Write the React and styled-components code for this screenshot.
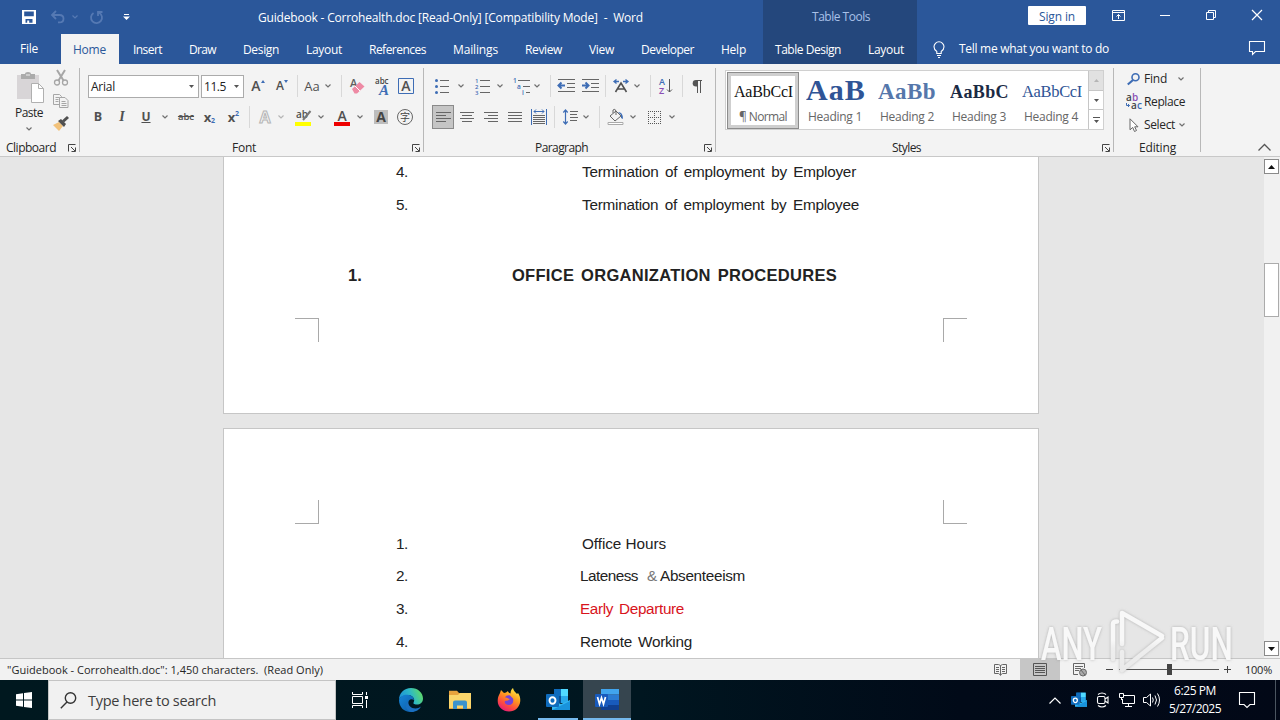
import styled, { createGlobalStyle, css } from "styled-components"
import { useLayoutEffect, useRef, useState } from "react"

const GlobalStyle = createGlobalStyle`
  * {
    box-sizing: border-box;
  }

  body {
    margin: 0;
    overflow: hidden;
    font-family: "Open Sans", "Noto Sans", sans-serif;
    font-size: 12px;
    color: #262626;
  }

  svg {
    display: block;
    flex: none;
    overflow: visible;
  }
`

const Window = styled.div`
  position: relative;
  width: 1280px;
  height: 720px;
  display: flex;
  flex-direction: column;
  overflow: hidden;
`

/* ---------- shared pieces ---------- */

const FitBox = styled.span`
  flex: none;
  display: block;
  width: ${(p) => p.$w}px;
  margin-left: ${(p) => p.$ml || 0}px;
  white-space: pre;
`

// spreads the letters so the label takes exactly w pixels
function Label({ w, ml, children, className }) {
  const ref = useRef(null)
  const [spacing, setSpacing] = useState(0)

  useLayoutEffect(() => {
    const el = ref.current
    const natural = el.getBoundingClientRect().width
    setSpacing((w - natural) / el.textContent.length)
  }, [w])

  return (
    <FitBox $w={w} $ml={ml} className={className}>
      <span ref={ref} style={{ letterSpacing: spacing }}>
        {children}
      </span>
    </FitBox>
  )
}

const Cell = styled.div`
  flex: none;
  width: ${(p) => p.$w || 24}px;
  height: 24px;
  margin-left: ${(p) => p.$ml || 0}px;
  display: flex;
  align-items: center;
  justify-content: center;
`

const Divider = styled.div`
  flex: none;
  width: 1px;
  height: 22px;
  margin-left: ${(p) => p.$ml || 0}px;
  background: #d8d8d8;
`

function Svg({ w = 16, h = 16, children, ...rest }) {
  return (
    <svg width={w} height={h} viewBox={`0 0 ${w} ${h}`} fill="none" {...rest}>
      {children}
    </svg>
  )
}

function Chevron({ color = "#707070" }) {
  return (
    <Svg w={6} h={4} stroke={color} strokeWidth="1.2">
      <path d="M.5 .5 3 3 5.5 .5" />
    </Svg>
  )
}

function Launcher() {
  return (
    <Svg w={8} h={8} stroke="#444">
      <path d="M.5 7.500V.5H7.500M3 3l4 4M7.500 3.500v4h-4" />
    </Svg>
  )
}

/* ---------- title bar ---------- */

const TitleBar = styled.header`
  height: 34px;
  flex: none;
  display: flex;
  background: #2b579a;
  color: #fff;
`

const QuickAccess = styled.div`
  width: 258px;
  height: 34px;
  padding-left: 17px;
  display: flex;
  align-items: center;
`

const DocTitle = styled.div`
  width: 505px;
  padding-top: 9px;
  line-height: 18px;
`

const ContextTitle = styled.div`
  width: 154px;
  padding: 9px 0 0 49px;
  line-height: 16px;
  background: #24477c;
  color: #a9c1e8;
`

const SignIn = styled.button`
  width: 58px;
  height: 19px;
  margin: 6px 0 0 111px;
  padding: 1px 0 0 11px;
  border: 0;
  border-radius: 1px;
  background: #fff;
  color: #2b579a;
  font: inherit;
  line-height: 20px;
  text-align: left;
`

const WindowButtons = styled.div`
  display: flex;
  padding: 3px 0 0 10px;
  height: 27px;
`

/* ---------- tabs ---------- */

const TabBar = styled.nav`
  height: 30px;
  flex: none;
  display: flex;
  background: #2b579a;
  color: #fff;
  line-height: 32px;
`

const FileTab = styled.div`
  width: 61px;
  padding-left: 20px;
  line-height: 30px;
`

const ActiveTab = styled.div`
  width: 58px;
  padding-left: 12px;
  background: #f3f3f3;
  color: #2b579a;
`

const TabList = styled.div`
  width: 644px;
  padding-left: 14px;
  display: flex;
  gap: 27px;
`

const ContextTabs = styled.div`
  width: 154px;
  padding-left: 12px;
  display: flex;
  gap: 27px;
  background: #24477c;
`

const TellMe = styled.div`
  display: flex;
  align-items: center;
  gap: 14px;
  padding-left: 16px;
  width: 332px;
  line-height: 30px;
`

const CommentIcon = styled.div`
  padding-top: 7px;
`

/* ---------- ribbon ---------- */

const Ribbon = styled.section`
  height: 93px;
  flex: none;
  display: flex;
  background: #f3f3f3;
  border-bottom: 1px solid #c8c8c8;
`

const GroupLine = styled.div`
  flex: none;
  width: 1px;
  height: 84px;
  margin-top: 4px;
  background: #b8b8b8;
`

const Group = styled.div`
  flex: none;
  width: ${(p) => p.$w}px;
  display: flex;
  flex-direction: column;
`

const GroupBody = styled.div`
  height: 76px;
  padding: 10px 0 0 ${(p) => p.$pl || 0}px;
`

const Row = styled.div`
  display: flex;
  align-items: center;
  height: 24px;
  margin-bottom: 7px;
`

const Caption = styled.div`
  height: 16px;
  display: flex;
  align-items: center;
  justify-content: space-between;
  padding: 0 3px 0 ${(p) => p.$pl}px;
  line-height: 16px;
`

const ClipboardBody = styled.div`
  height: 76px;
  display: flex;
`

const PasteButton = styled.div`
  width: 49px;
  padding: 8px 0 0 15px;
  display: flex;
  flex-direction: column;

  > span {
    margin-top: 1px;
  }

  > svg:last-child {
    margin: 6px 0 0 11px;
  }
`

const ClipboardTools = styled.div`
  padding-top: 6px;
  display: flex;
  flex-direction: column;
  gap: 7px;

  svg {
    margin-left: 4px;
  }
`

const Combo = styled.div`
  flex: none;
  width: ${(p) => p.$w}px;
  height: 23px;
  margin-left: ${(p) => p.$ml || 0}px;
  padding: 0 4px 0 2px;
  display: flex;
  align-items: center;
  justify-content: space-between;
  border: 1px solid #ababab;
  background: #fff;
  color: #222;
`

const Glyph = styled.span`
  font-family: ${(p) => (p.$serif ? '"Liberation Serif", serif' : '"Open Sans", sans-serif')};
  font-size: ${(p) => p.$size || 14}px;
  font-weight: ${(p) => p.$weight || 700};
  font-style: ${(p) => (p.$italic ? "italic" : "normal")};
  text-decoration: ${(p) => p.$deco || "none"};
  color: ${(p) => p.$color || "#505050"};
  line-height: 20px;
`

const Pressed = styled.div`
  width: 22px;
  height: 24px;
  display: flex;
  align-items: center;
  justify-content: center;
  border: 1px solid #8a8a8a;
  background: #c5c5c5;
`

const Gallery = styled.div`
  width: 379px;
  height: 60px;
  margin: -4px 0 0 9px;
  padding-left: 1px;
  display: flex;
  border: 1px solid #d0d0d0;
  background: #fff;
`

const StyleTile = styled.div`
  flex: none;
  width: 72px;
  height: 57px;
  margin-top: 1px;
  display: flex;
  flex-direction: column;
  overflow: hidden;
  ${(p) =>
    p.$active &&
    css`
      box-shadow: inset 0 0 0 1px #8c8c8c, inset 0 0 0 4px #cfcfcf;
    `}
`

const Sample = styled.div`
  height: 36px;
  margin-left: 7px;
  width: 60px;
  overflow: hidden;
  font-family: "Liberation Serif", serif;
  font-size: ${(p) => p.$size}px;
  font-weight: ${(p) => p.$weight || 400};
  line-height: ${(p) => p.$lh || 39}px;
  color: ${(p) => p.$color};
`

const StyleName = styled.div`
  padding-left: ${(p) => p.$pl}px;
  line-height: 18px;
  color: #666;
`

const GalleryScroll = styled.div`
  width: 15px;
  margin-left: auto;
  display: flex;
  flex-direction: column;
  border-left: 1px solid #c6c6c6;
`

const GalleryButton = styled.div`
  flex: 1;
  display: flex;
  align-items: center;
  justify-content: center;
  background: ${(p) => (p.$disabled ? "#e1e1e1" : "#fff")};

  & + & {
    border-top: 1px solid #c6c6c6;
  }
`

const EditingBody = styled.div`
  height: 76px;
  padding: 3px 0 0 10px;
`

const EditRow = styled.div`
  height: 23px;
  display: flex;
  align-items: center;
`

const EditIcon = styled.div`
  width: 19px;
  margin-right: 1px;
  display: flex;
  justify-content: center;
`

const CollapseArea = styled.div`
  flex: 1;
  display: flex;
  align-items: flex-end;
  justify-content: flex-end;
  padding: 0 9px 5px 0;
`

/* ---------- document ---------- */

const Workspace = styled.main`
  height: 501px;
  flex: none;
  display: flex;
  justify-content: space-between;
  padding-left: 223px;
  background: #e6e6e6;
`

const Pages = styled.div`
  width: 816px;
  display: flex;
  flex-direction: column;
  gap: 14px;
  overflow: hidden;
`

const Page = styled.article`
  flex: none;
  height: ${(p) => p.$h}px;
  border: 1px solid #c6c6c6;
  border-top-width: ${(p) => (p.$cut ? 0 : 1)}px;
  background: #fff;
  color: #222;
  font-family: "Liberation Sans", Arial, sans-serif;
  font-size: 15.3px;
`

const Line = styled.div`
  display: flex;
  height: ${(p) => p.$h || 32}px;
  line-height: ${(p) => p.$h || 32}px;
  margin-top: ${(p) => p.$mt || 0}px;
  padding-left: ${(p) => p.$pl || 172}px;
  word-spacing: ${(p) => p.$ws || 0}px;
`

const Heading = styled(Line)`
  font-weight: 700;
  font-size: 16.5px;
`

const Amp = styled(Label)`
  color: #777;
`

const RedLabel = styled(Label)`
  color: #d8141c;
  word-spacing: 2px;
`

const CropMarks = styled.div`
  display: flex;
  justify-content: space-between;
  margin: ${(p) => p.$mt}px 71px 0;
`

const Crop = styled.div`
  width: 24px;
  height: 24px;
  border: 0 solid #a9a9a9;
  border-width: ${(p) => p.$sides};
`

const ScrollBar = styled.div`
  width: 16px;
  padding-top: 2px;
  display: flex;
  flex-direction: column;
  background: #f1f1f1;
`

const ScrollButton = styled.div`
  width: 15px;
  height: 15px;
  display: flex;
  align-items: center;
  justify-content: center;
  border: 1px solid #8a8a8a;
  background: #fff;
`

const Thumb = styled.div`
  width: 15px;
  height: 54px;
  margin: 89px 0 324px;
  border: 1px solid #ababab;
  background: #fff;
`

/* ---------- status bar ---------- */

const StatusBar = styled.footer`
  height: 22px;
  flex: none;
  display: flex;
  align-items: center;
  padding-left: 7px;
  border-top: 1px solid #c6c6c6;
  background: #f2f2f2;
  font-size: 11px;
  line-height: 21px;
`

const ViewButton = styled.div`
  width: 40px;
  height: 21px;
  display: flex;
  align-items: center;
  justify-content: center;
  background: ${(p) => (p.$active ? "#c6c6c6" : "transparent")};
`

const Views = styled.div`
  display: flex;
  margin-left: 657px;
`

const Slider = styled.div`
  width: 100px;
  height: 21px;
  margin: 0 5px;
  display: flex;
  align-items: center;
  justify-content: center;
  background: linear-gradient(#555, #555) center / 100% 1px no-repeat;
`

const Knob = styled.div`
  width: 5px;
  height: 11px;
  background: #444;
`

/* ---------- taskbar ---------- */

const Taskbar = styled.div`
  height: 40px;
  flex: none;
  display: flex;
  background: linear-gradient(90deg, #00181f 0%, #001620 50%, #010a18 75%, #020817 100%);
  color: #fff;
`

const Start = styled.div`
  width: 48px;
  display: flex;
  align-items: center;
  justify-content: center;
`

const Search = styled.div`
  width: 288px;
  padding-left: 11px;
  display: flex;
  align-items: center;
  border: 1px solid #c4c4c4;
  background: #f1f1f1;
  color: #3d3d3d;
  font-size: 14.5px;
`

const TaskButton = styled.div`
  width: ${(p) => p.$w || 49}px;
  margin-left: ${(p) => p.$ml || 0}px;
  height: 40px;
  display: flex;
  align-items: center;
  justify-content: center;
  background: ${(p) => (p.$active ? "#36454f" : "transparent")};
  border-bottom: ${(p) => (p.$open ? "2px solid #76b9ed" : "0")};
  padding-top: ${(p) => (p.$open ? 2 : 0)}px;
`

const Tray = styled.div`
  display: flex;
  align-items: center;
  margin-left: auto;
`

const TrayIcon = styled.div`
  width: 24px;
  display: flex;
  justify-content: center;
`

const Clock = styled.div`
  width: 54px;
  margin: 0 16px 0 6px;
  line-height: 18px;
`

const ShowDesktop = styled.div`
  width: 5px;
  height: 40px;
  margin-left: 20px;
  border-left: 1px solid #4b5560;
`

const Watermark = styled.div`
  position: absolute;
  left: 1038px;
  top: 606px;
`

/* ---------- icons ---------- */

const blue = "#3e6db5"

function Lines({ rows, color = "#666" }) {
  return (
    <g stroke={color}>
      {rows.map(([x1, x2, y]) => (
        <path key={y} d={`M${x1} ${y}H${x2}`} />
      ))}
    </g>
  )
}

function IndentIcon({ flip }) {
  return (
    <Svg w={17} h={14}>
      <Lines rows={[[0, 17, 0.5], [9, 17, 4.5], [9, 17, 8.5], [0, 17, 12.5]]} />
      <path
        d={flip ? "M0 6.500h6M3.500 3.500l3 3-3 3" : "M7 6.500H1M3.500 3.500l-3 3 3 3"}
        stroke={blue}
        strokeWidth="2"
      />
    </Svg>
  )
}

function OutlookIcon({ s = 24 }) {
  return (
    <svg width={s} height={s} viewBox="0 0 24 24">
      <path d="M8 1h14v14H8z" fill="#1490df" />
      <path d="M15 1h7v7h-7z" fill="#50d9ff" />
      <path d="M8 1h7v7H8z" fill="#0f6cbd" />
      <path d="M8 8h7v7H8z" fill="#0a4f94" />
      <path d="M15 8h7v7h-7z" fill="#28a8ea" />
      <path d="M6 12l9 4 9-4v10H6z" fill="#35b8f1" />
      <path d="M6 22l18-9v9z" fill="#1993dc" />
      <rect x="0" y="6" width="13" height="13" rx="1" fill="#0f6cbd" />
      <ellipse cx="6.500" cy="12.500" rx="3" ry="3.300" fill="none" stroke="#fff" strokeWidth="1.900" />
    </svg>
  )
}

function WordIcon() {
  return (
    <svg width="25" height="24" viewBox="0 0 25 24">
      <path d="M6 1h18v5.500H6z" fill="#41a5ee" />
      <path d="M6 6.500h18V12H6z" fill="#2b7cd3" />
      <path d="M6 12h18v5H6z" fill="#185abd" />
      <path d="M6 17h18v5H6z" fill="#103f91" />
      <rect x="0" y="6" width="13" height="13" rx="1" fill="#185abd" />
      <path d="M2.500 9l2 7 2-6.300 2 6.300 2-7" fill="none" stroke="#fff" strokeWidth="1.700" />
    </svg>
  )
}

function EdgeIcon() {
  return (
    <svg width="24" height="24" viewBox="0 0 24 24">
      <defs>
        <linearGradient id="edgeTop" x1="0" x2="1" y1=".6" y2=".3">
          <stop offset="0" stopColor="#1c8fd8" />
          <stop offset=".5" stopColor="#2cb8c8" />
          <stop offset="1" stopColor="#62dc62" />
        </linearGradient>
        <linearGradient id="edgeLow" x1="0" x2="1" y1="0" y2="1">
          <stop offset="0" stopColor="#1685d8" />
          <stop offset="1" stopColor="#0c59a4" />
        </linearGradient>
      </defs>
      <path d="M0 12C0 5 5 0 12 0s12 5 12 10.500c0 4-3 6-6 6-3.500 0-4-1.300-3.300-2.300C16 12 15 8 10 7 5 6.500 1 9 0 12z" fill="url(#edgeTop)" />
      <path d="M0 12c1-3.500 4.500-5.500 8.500-5.300 4 .3 6.500 2.800 6.500 5.300-3-2-6 0-6 3.500 0 4 4 6.500 8 6.200-2 1.500-3.500 2.300-5.500 2.300C5 24 0 19 0 12z" fill="url(#edgeLow)" />
      <path d="M9.500 13c-1 4 2.500 7.500 7 7.500 2 0 4-.8 5.500-2-1.500 3-5 5.500-9.500 5.500C7 23 5 17 9.500 13z" fill="#1a6fc0" />
    </svg>
  )
}

function FolderIcon() {
  return (
    <svg width="22" height="20" viewBox="0 0 22 20">
      <path d="M0 2V.8h8L10 3h12v16H0z" fill="#e8a33d" />
      <path d="M0 5h9l2-2h11v15H0z" fill="#fbd66b" />
      <path d="M4 19v-6.500Q4 10.500 6 10.500h10q2 0 2 2V19h-4v-3.500H8V19z" fill="#3d93cc" />
    </svg>
  )
}

function FirefoxIcon() {
  return (
    <svg width="24" height="24" viewBox="0 0 24 24">
      <defs>
        <linearGradient id="fox" x1=".8" x2=".25" y1="0" y2="1">
          <stop offset="0" stopColor="#fff14a" />
          <stop offset=".4" stopColor="#ff9a1f" />
          <stop offset=".7" stopColor="#ff4f3d" />
          <stop offset="1" stopColor="#e5177b" />
        </linearGradient>
      </defs>
      <path d="M3 5l1-3 3 3 2-.5L11 3c0 1 1 2 2.500 2.500C13.500 3 14.500 1 16 0c.5 3 2.500 4 4 6l1-1c2 3 2.500 5.500 2.200 8.500C22.500 19.500 18 23.500 12 23.500S.7 19 .7 13C.7 10 1.500 7.500 3 5z" fill="url(#fox)" />
      <path d="M8 9.500c1-2 3-2.500 5-2l3 3c1 4-1 6.500-4 6.500-3.500 0-5-2.500-4-4l3-.5 2-1.500c-2 0-2-1.500-5-1.500z" fill="#7542d8" />
    </svg>
  )
}

/* ---------- sections ---------- */

function Header() {
  return (
    <>
      <TitleBar>
        <QuickAccess>
          <Cell>
            <Svg w={14} h={14} fill="#fff">
              <path d="M0 0h14v14H0zM2.200 1.500v4.800h9.600V1.500zM3.500 9v3.700h1.700v-2.200h2V12.700h3.300V9z" fillRule="evenodd" />
            </Svg>
          </Cell>
          <Cell $ml={5}>
            <Svg w={14} h={12} stroke="#5579b3" strokeWidth="1.800">
              <path d="M5 0L1 4l4 4M1 4h7.500q4 0 4 3.700t-4 3.700H7" />
            </Svg>
          </Cell>
          <Cell $w={10}>
            <Chevron color="#5579b3" />
          </Cell>
          <Cell $ml={4}>
            <Svg w={13} h={13} stroke="#5579b3" strokeWidth="1.800">
              <path d="M3.500 2A5.500 5.500 0 1 0 9 1.700M8 5V1h4.500" />
            </Svg>
          </Cell>
          <Cell $ml={6}>
            <Svg w={7} h={6} fill="#fff">
              <path d="M1 0h5v1H1zM0 2.500h7L3.500 6z" />
            </Svg>
          </Cell>
        </QuickAccess>
        <DocTitle>
          <Label w={385}>Guidebook - Corrohealth.doc [Read-Only] [Compatibility Mode]  -  Word</Label>
        </DocTitle>
        <ContextTitle>
          <Label w={58}>Table Tools</Label>
        </ContextTitle>
        <SignIn>
          <Label w={36}>Sign in</Label>
        </SignIn>
        <WindowButtons>
          <Cell $w={45}>
            <Svg w={13} h={11} stroke="#fff">
              <path d="M.5 .5h12v10H.5zM.5 2.500h12M6.500 9V4.500M4.500 6.500l2-2 2 2" />
            </Svg>
          </Cell>
          <Cell $w={46} $ml={1}>
            <Svg w={10} h={1} stroke="#fff">
              <path d="M0 .5h10" />
            </Svg>
          </Cell>
          <Cell $w={46}>
            <Svg w={10} h={10} stroke="#fff">
              <path d="M.5 2.500h7v7h-7zM2.500 2V.5h7v7H8" />
            </Svg>
          </Cell>
          <Cell $w={46}>
            <Svg w={10} h={10} stroke="#fff" strokeWidth="1.200">
              <path d="M0 0l10 10M10 0L0 10" />
            </Svg>
          </Cell>
        </WindowButtons>
      </TitleBar>

      <TabBar>
        <FileTab>
          <Label w={18}>File</Label>
        </FileTab>
        <ActiveTab>
          <Label w={33}>Home</Label>
        </ActiveTab>
        <TabList>
          <Label w={29}>Insert</Label>
          <Label w={27}>Draw</Label>
          <Label w={36}>Design</Label>
          <Label w={36}>Layout</Label>
          <Label w={57}>References</Label>
          <Label w={45}>Mailings</Label>
          <Label w={37}>Review</Label>
          <Label w={25}>View</Label>
          <Label w={53}>Developer</Label>
          <Label w={25}>Help</Label>
        </TabList>
        <ContextTabs>
          <Label w={66}>Table Design</Label>
          <Label w={36}>Layout</Label>
        </ContextTabs>
        <TellMe>
          <Svg w={12} h={17} stroke="#fff" strokeWidth="1.100">
            <path d="M3.800 12.500V10.500Q1 8.700 1 5.800a5 5 0 0 1 10 0Q11 8.700 8.200 10.500v2zM4 14.500h4M5 16.500h2" />
          </Svg>
          <Label w={150}>Tell me what you want to do</Label>
        </TellMe>
        <CommentIcon>
          <Svg w={16} h={14} stroke="#fff" strokeWidth="1.100">
            <path d="M.5 .5h15v10H6.500L3.500 13.500V10.500h-3z" />
          </Svg>
        </CommentIcon>
      </TabBar>
    </>
  )
}

function ClipboardGroup() {
  return (
    <Group $w={79}>
      <ClipboardBody>
        <PasteButton>
          <Svg w={28} h={31}>
            <path d="M2 3h22v24H2z" fill="#d8d5d7" />
            <path d="M6 2h4q0-2 3-2t3 2h4v5H6z" fill="#ababab" />
            <path d="M11 3h4" stroke="#eee" />
            <path d="M16.500 11.500h7l5 5v14h-12z" fill="#fff" stroke="#b0b0b0" />
            <path d="M23.500 11.500v5h5" stroke="#b0b0b0" />
          </Svg>
          <Label w={28}>Paste</Label>
          <Chevron />
        </PasteButton>
        <ClipboardTools>
          <Svg w={16} h={16} stroke="#a6a6a6" strokeWidth="1.300">
            <path d="M4 0l6.500 10.500M12 0L5.500 10.500" strokeWidth="2" />
            <circle cx="4" cy="12.500" r="2.500" />
            <circle cx="12" cy="12.500" r="2.500" />
          </Svg>
          <Svg w={16} h={16} stroke="#a6a6a6">
            <path d="M.5 1.500h6l2 2v8h-8zM2.500 4.500h4M2.500 6.500h3M2.500 8.500h3" />
            <path d="M6.500 4.500h5.500l3 3v7h-8.500z" fill="#f3f3f3" />
            <path d="M8.500 8.500h4M8.500 10.500h5M8.500 12.500h5" />
          </Svg>
          <Svg w={16} h={16}>
            <path d="M0 9l6-3 4 4-4 5z" fill="#f2c27b" />
            <path d="M5 5l6 6 2-3-5-5z" fill="#505050" />
            <path d="M10 5.500L15 1" stroke="#505050" strokeWidth="3" />
          </Svg>
        </ClipboardTools>
      </ClipboardBody>
      <Caption $pl={6}>
        <Label w={50}>Clipboard</Label>
        <Launcher />
      </Caption>
    </Group>
  )
}

function DropArrow() {
  return (
    <Svg w={5} h={3} fill="#555">
      <path d="M0 0h5L2.500 3z" />
    </Svg>
  )
}

function FontGroup() {
  return (
    <Group $w={343}>
      <GroupBody $pl={6}>
        <Row>
          <Combo $w={111} $ml={2}>
            <Label w={24}>Arial</Label>
            <DropArrow />
          </Combo>
          <Combo $w={43} $ml={2}>
            <Label w={22}>11.5</Label>
            <DropArrow />
          </Combo>
          <Cell $ml={2}>
            <Glyph $weight={600}>A</Glyph>
            <Svg w={4} h={13} fill={blue}>
              <path d="M0 3l2-3 2 3z" />
            </Svg>
          </Cell>
          <Cell>
            <Glyph $weight={600} $size={12}>A</Glyph>
            <Svg w={4} h={13} fill={blue}>
              <path d="M0 0h4L2 3z" />
            </Svg>
          </Cell>
          <Divider $ml={3} />
          <Cell $w={18} $ml={5}>
            <Glyph $weight={500} $size={13}>Aa</Glyph>
          </Cell>
          <Cell $w={10} $ml={2}>
            <Chevron />
          </Cell>
          <Divider $ml={8} />
          <Cell $ml={4}>
            <Svg w={16} h={16}>
              <text x="0" y="9" fontFamily="Open Sans" fontSize="11" fontWeight="600" fill="#606060">A</text>
              <path d="M2 11l7.500-7 5 4.500L7 15.500H4.500z" fill="#ee8aa4" />
              <path d="M5 8l5 5" stroke="#fff" />
            </Svg>
          </Cell>
          <Cell>
            <Svg w={16} h={17}>
              <text x="1" y="6" fontFamily="Open Sans" fontSize="8" fontWeight="600" fill="#444">abc</text>
              <text x="5" y="17" fontFamily="Liberation Serif" fontSize="15" fontWeight="700" fontStyle="italic" fill={blue}>A</text>
            </Svg>
          </Cell>
          <Cell>
            <Svg w={16} h={16}>
              <path d="M.5 .5h15v15H.5z" stroke={blue} />
              <text x="3.200" y="13" fontFamily="Open Sans" fontSize="14" fontWeight="600" fill="#505050">A</text>
            </Svg>
          </Cell>
        </Row>
        <Row>
          <Cell>
            <Glyph $size={12.500}>B</Glyph>
          </Cell>
          <Cell>
            <Glyph $size={14} $serif $italic>I</Glyph>
          </Cell>
          <Cell>
            <Glyph $size={12} $deco="underline">U</Glyph>
          </Cell>
          <Cell $w={14}>
            <Chevron />
          </Cell>
          <Cell $ml={2}>
            <Glyph $size={9.500} $weight={600} $deco="line-through">abc</Glyph>
          </Cell>
          <Cell>
            <Glyph $size={13}>x</Glyph>
            <Svg w={5} h={12}>
              <text x="0" y="12" fontFamily="Open Sans" fontSize="7" fontWeight="700" fill={blue}>2</text>
            </Svg>
          </Cell>
          <Cell>
            <Glyph $size={13}>x</Glyph>
            <Svg w={5} h={12}>
              <text x="0" y="5" fontFamily="Open Sans" fontSize="7" fontWeight="700" fill={blue}>2</text>
            </Svg>
          </Cell>
          <Divider $ml={3} />
          <Cell $ml={3}>
            <Svg w={14} h={14}>
              <text x="1.500" y="13" fontFamily="Open Sans" fontSize="16" fontWeight="700" fill="#f3f3f3" stroke="#b5b5b5">A</text>
            </Svg>
          </Cell>
          <Cell $w={10} $ml={-1}>
            <Chevron color="#b5b5b5" />
          </Cell>
          <Cell $ml={5}>
            <Svg w={17} h={17}>
              <text x="1" y="9" fontFamily="Open Sans" fontSize="10" fontWeight="600" fill="#505050">ab</text>
              <path d="M15.500 2L8 11" stroke="#777" strokeWidth="2" />
              <path d="M0 13h16v4H0z" fill="#ffff00" />
            </Svg>
          </Cell>
          <Cell $w={10} $ml={1}>
            <Chevron />
          </Cell>
          <Cell $ml={4}>
            <Svg w={16} h={17}>
              <text x="3.500" y="11.500" fontFamily="Open Sans" fontSize="14" fontWeight="600" fill="#505050">A</text>
              <path d="M0 13h16v4H0z" fill="#ee0000" />
            </Svg>
          </Cell>
          <Cell $w={10} $ml={1}>
            <Chevron />
          </Cell>
          <Cell $ml={4}>
            <Svg w={14} h={14}>
              <path d="M0 0h14v14H0z" fill="#bdbdbd" />
              <text x="2.300" y="12" fontFamily="Open Sans" fontSize="14" fontWeight="700" fill="#444">A</text>
            </Svg>
          </Cell>
          <Cell>
            <Svg w={16} h={16}>
              <circle cx="8" cy="8" r="7.500" stroke="#666" />
              <text x="3" y="12" fontFamily="Noto Sans CJK SC" fontSize="10" fill="#444">字</text>
            </Svg>
          </Cell>
        </Row>
      </GroupBody>
      <Caption $pl={152}>
        <Label w={24}>Font</Label>
        <Launcher />
      </Caption>
    </Group>
  )
}

function ParagraphGroup() {
  return (
    <Group $w={291}>
      <GroupBody $pl={6}>
        <Row>
          <Cell>
            <Svg w={14} h={15}>
              <g fill={blue}>
                <circle cx="1.500" cy="1.500" r="1.500" />
                <circle cx="1.500" cy="7.500" r="1.500" />
                <circle cx="1.500" cy="13.500" r="1.500" />
              </g>
              <Lines rows={[[5, 14, 1.5], [5, 14, 7.5], [5, 14, 13.5]]} />
            </Svg>
          </Cell>
          <Cell $w={10} $ml={2}>
            <Chevron />
          </Cell>
          <Cell $ml={4}>
            <Svg w={15} h={15}>
              <g fontFamily="Open Sans" fontSize="6" fontWeight="600" fill={blue}>
                <text x="0" y="4">1</text>
                <text x="0" y="10">2</text>
                <text x="0" y="16">3</text>
              </g>
              <Lines rows={[[5, 15, 1.5], [5, 15, 7.5], [5, 15, 13.5]]} />
            </Svg>
          </Cell>
          <Cell $w={10} $ml={1}>
            <Chevron />
          </Cell>
          <Cell $ml={4}>
            <Svg w={17} h={15}>
              <g fontFamily="Open Sans" fontSize="6.500" fontWeight="600" fill={blue}>
                <text x="0" y="4">1</text>
                <text x="4" y="10">a</text>
                <text x="9" y="16">i</text>
              </g>
              <Lines rows={[[5, 17, 1.5], [10, 17, 7.5], [13, 17, 13.5]]} />
            </Svg>
          </Cell>
          <Cell $w={10} $ml={-1}>
            <Chevron />
          </Cell>
          <Divider $ml={8} />
          <Cell $ml={3}>
            <IndentIcon />
          </Cell>
          <Cell>
            <IndentIcon flip />
          </Cell>
          <Divider $ml={3} />
          <Cell $ml={3}>
            <Svg w={16} h={14}>
              <path d="M6 2.500H1M3.500 .5l-2.500 2 2.500 2M10 2.500h5M12.500 .5l2.500 2-2.500 2" stroke={blue} strokeWidth="1.300" />
              <path d="M2.500 13L8 4l5.500 9M4.500 10h7" stroke="#505050" strokeWidth="1.600" />
            </Svg>
          </Cell>
          <Cell $w={10} $ml={-1}>
            <Chevron />
          </Cell>
          <Divider $ml={8} />
          <Cell $ml={3}>
            <Svg w={14} h={16}>
              <text x="0" y="7" fontFamily="Open Sans" fontSize="9" fontWeight="600" fill={blue}>A</text>
              <text x="0" y="16" fontFamily="Open Sans" fontSize="9" fontWeight="600" fill="#8a4fb5">Z</text>
              <path d="M10.500 1v13M8 11.500l2.500 2.500 2.500-2.500" stroke="#555" />
            </Svg>
          </Cell>
          <Divider $ml={4} />
          <Cell $ml={2}>
            <Svg w={10} h={13}>
              <path d="M5 .5H10M5.500 0v13M8.500 0v13" stroke="#555" />
              <path d="M5.500 0H4a3.300 3.300 0 0 0 0 6.600h1.500z" fill="#555" />
            </Svg>
          </Cell>
        </Row>
        <Row>
          <Cell $w={22} $ml={2}>
            <Pressed>
              <Svg w={15} h={11}>
                <Lines rows={[[0, 15, 0.5], [0, 10, 3.5], [0, 15, 6.5], [0, 10, 9.5]]} />
              </Svg>
            </Pressed>
          </Cell>
          <Cell $ml={1}>
            <Svg w={14} h={11}>
              <Lines rows={[[0, 14, 0.5], [2, 12, 3.5], [0, 14, 6.5], [2, 12, 9.5]]} />
            </Svg>
          </Cell>
          <Cell>
            <Svg w={14} h={11}>
              <Lines rows={[[0, 14, 0.5], [4, 14, 3.5], [0, 14, 6.5], [4, 14, 9.5]]} />
            </Svg>
          </Cell>
          <Cell>
            <Svg w={14} h={11}>
              <Lines rows={[[0, 14, 0.5], [0, 14, 3.5], [0, 14, 6.5], [0, 14, 9.5]]} />
            </Svg>
          </Cell>
          <Cell>
            <Svg w={16} h={16}>
              <path d="M.5 0v16M15.500 0v16M3 2.500h10M5 .5L3 2.500 5 4.500M11 .5L13 2.500 11 4.500" stroke={blue} />
              <Lines rows={[[2, 14, 6.5], [2, 14, 8.5], [2, 14, 10.5], [2, 14, 12.5], [2, 14, 14.5]]} />
            </Svg>
          </Cell>
          <Divider $ml={3} />
          <Cell $ml={3}>
            <Svg w={15} h={16}>
              <path d="M2.500 1v14M.3 3.500L2.500 1l2.200 2.500M.3 12.500L2.500 15l2.200-2.500" stroke={blue} strokeWidth="1.200" />
              <Lines rows={[[7, 15, 2.5], [7, 14, 5.5], [7, 15, 8.5], [7, 14, 11.5]]} />
            </Svg>
          </Cell>
          <Cell $w={10} $ml={-1}>
            <Chevron />
          </Cell>
          <Divider $ml={8} />
          <Cell $ml={3}>
            <Svg w={17} h={16}>
              <path d="M3 7l6-5 5 5-6 5zM6 4V1q2-2 3 1v4" stroke="#666" />
              <path d="M11 3q5 0 5 7l-2-1V6z" fill={blue} />
              <path d="M1 13.500h15v2H1z" stroke="#aaa" fill="#fff" />
            </Svg>
          </Cell>
          <Cell $w={10} $ml={1}>
            <Chevron />
          </Cell>
          <Cell $ml={4}>
            <Svg w={13} h={13} stroke="#555" strokeDasharray="1 1">
              <path d="M0 .5h13M0 6.500h13M.5 0v13M6.500 0v13M12.500 0v13M0 12.500h13" />
            </Svg>
          </Cell>
          <Cell $w={10} $ml={1}>
            <Chevron />
          </Cell>
        </Row>
      </GroupBody>
      <Caption $pl={111}>
        <Label w={53}>Paragraph</Label>
        <Launcher />
      </Caption>
    </Group>
  )
}

function StylesGroup() {
  return (
    <Group $w={397}>
      <GroupBody>
        <Gallery>
          <StyleTile $active>
            <Sample $size={16} $color="#111">
              <Label w={59}>AaBbCcI</Label>
            </Sample>
            <StyleName $pl={12}>
              <Label w={48}>¶ Normal</Label>
            </StyleName>
          </StyleTile>
          <StyleTile>
            <Sample $size={30} $weight={700} $color="#2f5496" $lh={35}>
              <Label w={60}>AaB</Label>
            </Sample>
            <StyleName $pl={9}>
              <Label w={54}>Heading 1</Label>
            </StyleName>
          </StyleTile>
          <StyleTile>
            <Sample $size={23} $weight={700} $color="#5577ab">
              <Label w={58}>AaBb</Label>
            </Sample>
            <StyleName $pl={9}>
              <Label w={54}>Heading 2</Label>
            </StyleName>
          </StyleTile>
          <StyleTile>
            <Sample $size={18} $weight={700} $color="#1b2a44" $lh={40}>
              <Label w={59}>AaBbC</Label>
            </Sample>
            <StyleName $pl={9}>
              <Label w={54}>Heading 3</Label>
            </StyleName>
          </StyleTile>
          <StyleTile>
            <Sample $size={16.5} $color="#2f5496">
              <Label w={60}>AaBbCcI</Label>
            </Sample>
            <StyleName $pl={9}>
              <Label w={54}>Heading 4</Label>
            </StyleName>
          </StyleTile>
          <GalleryScroll>
            <GalleryButton $disabled>
              <Svg w={5} h={3} fill="#b5b5b5">
                <path d="M0 3h5L2.500 0z" />
              </Svg>
            </GalleryButton>
            <GalleryButton>
              <DropArrow />
            </GalleryButton>
            <GalleryButton>
              <Svg w={7} h={6} fill="#555">
                <path d="M0 0h7v1H0zM1 3h5L3.500 6z" />
              </Svg>
            </GalleryButton>
          </GalleryScroll>
        </Gallery>
      </GroupBody>
      <Caption $pl={176}>
        <Label w={29}>Styles</Label>
        <Launcher />
      </Caption>
    </Group>
  )
}

function EditingGroup() {
  return (
    <Group $w={86}>
      <EditingBody>
        <EditRow>
          <EditIcon>
            <Svg w={13} h={12} stroke={blue} strokeWidth="1.600">
              <circle cx="8.500" cy="4.300" r="3.500" />
              <path d="M6 7L.8 11.500" strokeWidth="2.200" />
            </Svg>
          </EditIcon>
          <Label w={23}>Find</Label>
          <Cell $w={10} $ml={9}>
            <Chevron />
          </Cell>
        </EditRow>
        <EditRow>
          <EditIcon>
            <Svg w={16} h={16}>
              <g fontFamily="Open Sans" fontSize="10" fontWeight="600">
                <text x="0" y="7" fill="#444">a</text>
                <text x="6" y="7" fill="#8a4fb5">b</text>
                <text x="5" y="15" fill="#444">a</text>
                <text x="11" y="15" fill={blue}>c</text>
              </g>
              <path d="M.5 9v2.500h3M2 10l1.500 1.500L2 13" stroke={blue} />
            </Svg>
          </EditIcon>
          <Label w={41}>Replace</Label>
        </EditRow>
        <EditRow>
          <EditIcon>
            <Svg w={10} h={14} stroke="#666">
              <path d="M1 .8v11l2.700-2.400L5.500 13.500l2-1-1.800-3.700H9z" fill="#fff" />
            </Svg>
          </EditIcon>
          <Label w={31}>Select</Label>
          <Cell $w={10} $ml={2}>
            <Chevron />
          </Cell>
        </EditRow>
      </EditingBody>
      <Caption $pl={25}>
        <Label w={37}>Editing</Label>
      </Caption>
    </Group>
  )
}

function Document() {
  return (
    <Workspace>
      <Pages>
        <Page $h={257} $cut>
          <Line $h={30} $ws={2.5}>
            <Label w={12}>4.</Label>
            <Label w={274} ml={174}>Termination of employment by Employer</Label>
          </Line>
          <Line $h={34} $mt={1} $ws={2.5}>
            <Label w={12}>5.</Label>
            <Label w={277} ml={174}>Termination of employment by Employee</Label>
          </Line>
          <Heading $mt={37} $pl={124} $ws={2}>
            <Label w={14}>1.</Label>
            <Label w={325} ml={150}>OFFICE ORGANIZATION PROCEDURES</Label>
          </Heading>
          <CropMarks $mt={27}>
            <Crop $sides="1px 1px 0 0" />
            <Crop $sides="1px 0 0 1px" />
          </CropMarks>
        </Page>
        <Page $h={300}>
          <CropMarks $mt={71}>
            <Crop $sides="0 1px 1px 0" />
            <Crop $sides="0 0 1px 1px" />
          </CropMarks>
          <Line $mt={4}>
            <Label w={12}>1.</Label>
            <Label w={84} ml={174}>Office Hours</Label>
          </Line>
          <Line>
            <Label w={12}>2.</Label>
            <Label w={58} ml={172}>Lateness</Label>
            <Amp w={11} ml={9}>&amp;</Amp>
            <Label w={85} ml={2}>Absenteeism</Label>
          </Line>
          <Line $h={33}>
            <Label w={12}>3.</Label>
            <RedLabel w={104} ml={172}>Early Departure</RedLabel>
          </Line>
          <Line $h={33} $ws={2}>
            <Label w={12}>4.</Label>
            <Label w={112} ml={172}>Remote Working</Label>
          </Line>
        </Page>
      </Pages>
      <ScrollBar>
        <ScrollButton>
          <Svg w={7} h={4} fill="#111">
            <path d="M0 4h7L3.500 0z" />
          </Svg>
        </ScrollButton>
        <Thumb />
        <ScrollButton>
          <Svg w={7} h={4} fill="#111">
            <path d="M0 0h7L3.500 4z" />
          </Svg>
        </ScrollButton>
      </ScrollBar>
    </Workspace>
  )
}

function Status() {
  return (
    <StatusBar>
      <Label w={316}>"Guidebook - Corrohealth.doc": 1,450 characters.  (Read Only)</Label>
      <Views>
        <ViewButton>
          <Svg w={13} h={13} stroke="#666">
            <path d="M6.500 2.500v10M.5 1.500h4l2 1 2-1h4v9h-4l-2 1.500-2-1.500h-4zM2 4.500h3M2 6.500h3M2 8.500h3M8 4.500h3M8 6.500h3M8 8.500h3" />
          </Svg>
        </ViewButton>
        <ViewButton $active>
          <Svg w={14} h={13} stroke="#555">
            <path d="M.5 .5h13v12H.5zM2 3.500h10M2 5.500h10M2 7.500h10M2 9.500h10" />
          </Svg>
        </ViewButton>
        <ViewButton>
          <Svg w={14} h={14} stroke="#666">
            <path d="M5 11.500H.5V.5h11V5M2 3.500h8M2 5.500h6M2 7.500h4" />
            <circle cx="10" cy="9.500" r="3.500" fill="#aaa" />
            <path d="M8 7l4 5" />
          </Svg>
        </ViewButton>
      </Views>
      <Cell $w={9} $ml={5}>
        <Svg w={7} h={1} stroke="#444">
          <path d="M0 .5h7" />
        </Svg>
      </Cell>
      <Slider>
        <Knob />
      </Slider>
      <Cell $w={7}>
        <Svg w={7} h={7} stroke="#444">
          <path d="M0 3.500h7M3.500 0v7" />
        </Svg>
      </Cell>
      <Label w={27} ml={14}>100%</Label>
    </StatusBar>
  )
}

function SystemTaskbar() {
  return (
    <Taskbar>
      <Start>
        <Svg w={16} h={16} fill="#fff">
          <path d="M0 2.200l7-1v6.300H0zM8 1l8-1v7.500H8zM0 8.500h7v6.300l-7-1zM8 8.500h8V16l-8-1z" />
        </Svg>
      </Start>
      <Search>
        <Svg w={17} h={17} stroke="#333" strokeWidth="1.400">
          <circle cx="10.500" cy="6" r="5.200" />
          <path d="M7 10L.8 16.300" />
        </Svg>
        <Label w={128} ml={11}>Type here to search</Label>
      </Search>
      <TaskButton $w={48}>
        <Svg w={16} h={16} stroke="#fff">
          <path d="M.5 0v2.500h10V0M.5 4.500h10v7H.5zM.5 16v-2.500h10V16M14.500 0v3M14.500 8v8" />
          <path d="M13 4h3v3h-3z" fill="#fff" stroke="none" />
        </Svg>
      </TaskButton>
      <TaskButton $w={54}>
        <EdgeIcon />
      </TaskButton>
      <TaskButton $w={44}>
        <FolderIcon />
      </TaskButton>
      <TaskButton $w={54}>
        <FirefoxIcon />
      </TaskButton>
      <TaskButton $w={40} $ml={2} $open>
        <OutlookIcon />
      </TaskButton>
      <TaskButton $w={48} $ml={5} $open $active>
        <WordIcon />
      </TaskButton>
      <Tray>
        <TrayIcon>
          <Svg w={12} h={7} stroke="#fff" strokeWidth="1.200">
            <path d="M.5 6.500L6 1l5.500 5.500" />
          </Svg>
        </TrayIcon>
        <TrayIcon>
          <OutlookIcon s={16} />
        </TrayIcon>
        <TrayIcon>
          <Svg w={12} h={16} stroke="#fff" strokeWidth="1.100">
            <path d="M1 2.500Q5 -.5 9 2.500M1 13.500Q5 16.500 9 13.500" />
            <rect x=".5" y="4.500" width="7.500" height="7" rx="1.500" />
            <path d="M8 7l3-2v6L8 9" />
          </Svg>
        </TrayIcon>
        <TrayIcon>
          <Svg w={16} h={14} stroke="#fff">
            <path d="M5 2.500h10.500v8H3.500V6M9.500 10.500v3M6 13.500h7M.5 .5h4v4h-4zM2.500 4.500V7" />
          </Svg>
        </TrayIcon>
        <TrayIcon>
          <Svg w={17} h={14} stroke="#fff">
            <path d="M.5 4.500h3l4-3.500v12l-4-3.500h-3zM9.500 4.500q1.500 2.500 0 5M12 2.500q3 4.500 0 9M14.500 .5q4 6.500 0 13" />
          </Svg>
        </TrayIcon>
        <Clock>
          <Label w={42} ml={5}>6:25 PM</Label>
          <Label w={52}>5/27/2025</Label>
        </Clock>
        <Svg w={16} h={16} stroke="#fff" strokeWidth="1.100">
          <path d="M.5 .5h15v12H11l-3 3-3-3H.5z" />
        </Svg>
        <ShowDesktop />
      </Tray>
    </Taskbar>
  )
}

function Brand() {
  return (
    <Watermark>
      <svg width="200" height="68" viewBox="0 0 200 68" fill="none">
        <defs>
          <filter id="soft" x="-10%" y="-10%" width="120%" height="120%">
            <feDropShadow dx="0" dy="0" stdDeviation="1.5" floodColor="#888" floodOpacity=".6" />
          </filter>
          <linearGradient id="fade" x1="0" x2="0" y1="0" y2="68" gradientUnits="userSpaceOnUse">
            <stop offset=".5" stopColor="#f8f8f8" />
            <stop offset=".62" stopColor="#eee" />
            <stop offset="1" stopColor="#e9e9e9" />
          </linearGradient>
        </defs>
        <g filter="url(#soft)">
          <g fontFamily="Roboto" fontWeight="500" fontSize="50" fill="url(#fade)">
            <text transform="translate(3 54) scale(.62 .94)">ANY</text>
            <text transform="translate(132 54) scale(.63 .94)">RUN</text>
          </g>
          <g stroke="url(#fade)" strokeWidth="4.500" strokeLinejoin="round" strokeLinecap="round">
            <path d="M75 53V18q0-2.500 4-2.500M84 38V7l40 23M124 32L84 64V46" />
          </g>
        </g>
      </svg>
    </Watermark>
  )
}

export default function App() {
  return (
    <Window>
      <GlobalStyle />
      <Header />
      <Ribbon>
        <ClipboardGroup />
        <GroupLine />
        <FontGroup />
        <GroupLine />
        <ParagraphGroup />
        <GroupLine />
        <StylesGroup />
        <GroupLine />
        <EditingGroup />
        <GroupLine />
        <CollapseArea>
          <Svg w={13} h={7} stroke="#555" strokeWidth="1.300">
            <path d="M.5 6.500l6-6 6 6" />
          </Svg>
        </CollapseArea>
      </Ribbon>
      <Document />
      <Status />
      <SystemTaskbar />
      <Brand />
    </Window>
  )
}
